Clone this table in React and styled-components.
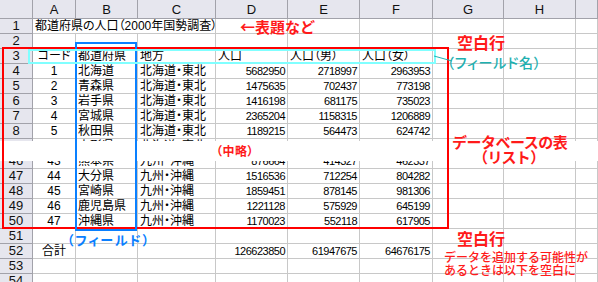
import React from 'react';
import styled, { createGlobalStyle } from 'styled-components';

const COLS = '33px 43px 62px 78px 72px 72px 73px 71px 72px 1fr';
const LETTERS = ['A', 'B', 'C', 'D', 'E', 'F', 'G', 'H', ''];

const GlobalStyle = createGlobalStyle`
  html, body {
    margin: 0;
    padding: 0;
    background: #fff;
  }
  body {
    font-family: "Liberation Sans", "Noto Sans CJK JP", sans-serif;
    color: #000;
  }
`;

const Sheet = styled.div`
  position: relative;
  width: 598px;
  height: 282px;
  overflow: hidden;
  background: #fff;
`;

const Row = styled.div`
  display: grid;
  grid-template-columns: ${COLS};
  height: ${({ $h }) => $h || 15}px;
  flex-shrink: 0;
`;

// 列見出し・行番号のセル
const HeadCell = styled.div`
  box-sizing: border-box;
  background: #e6e6ee;
  border-right: 1px solid #a2a2aa;
  border-bottom: 1px solid #a2a2aa;
  font-family: "Liberation Sans", sans-serif;
  font-size: 13px;
  line-height: ${({ $lh }) => $lh || 14}px;
  padding-top: ${({ $pt }) => $pt || 0}px;
  text-align: center;
  color: #111;
`;

const Cell = styled.div`
  box-sizing: border-box;
  border-right: 1px solid #c8c8c8;
  border-bottom: 1px solid #c8c8c8;
  grid-column: span ${({ $span }) => $span || 1};
  padding: 0 2px;
  font-family: "Liberation Sans", "Noto Sans CJK JP", sans-serif;
  font-feature-settings: "palt";
  font-size: ${({ $num }) => ($num ? 11 : 12)}px;
  letter-spacing: ${({ $num }) => ($num ? -0.5 : 0)}px;
  line-height: 14px;
  white-space: nowrap;
  overflow: hidden;
  text-align: ${({ $align }) => $align || 'left'};
`;

// 中略部分の切り取り
const Clip = styled.div`
  height: ${({ $h }) => $h}px;
  overflow: hidden;
  display: flex;
  flex-direction: column;
  justify-content: ${({ $bottom }) => ($bottom ? 'flex-end' : 'flex-start')};
`;

const Gap = styled.div`
  height: 20px;
  background: #fff;
`;

const Frame = styled.div`
  position: absolute;
  box-sizing: border-box;
  left: ${({ $x }) => $x}px;
  top: ${({ $y }) => $y}px;
  width: ${({ $w }) => $w}px;
  height: ${({ $h }) => $h}px;
  border: 2px solid ${({ $color }) => $color};
  pointer-events: none;
`;

const Note = styled.div`
  position: absolute;
  left: ${({ $x }) => $x}px;
  top: ${({ $y }) => $y}px;
  color: ${({ $color }) => $color || '#ff1a1a'};
  font-family: "Noto Sans CJK JP", sans-serif;
  font-size: ${({ $size }) => $size || 15}px;
  font-weight: ${({ $weight }) => $weight || 700};
  line-height: ${({ $lh }) => ($lh ? `${$lh}px` : 1)};
  white-space: nowrap;
  text-align: ${({ $align }) => $align || 'left'};
`;

const Line = styled.span`
  display: block;
  font-feature-settings: ${({ $palt }) => ($palt ? '"palt"' : 'normal')};
  letter-spacing: ${({ $ls }) => $ls || 0}px;
`;

const Connector = styled.svg`
  position: absolute;
  left: 433px;
  top: 54px;
`;

const rows = [
  { n: 1, title: '都道府県の人口（2000年国勢調査）' },
  { n: 2 },
  { n: 3, v: ['コード', '都道府県', '地方', '人口', '人口（男）', '人口（女）'], head: true },
  { n: 4, v: ['1', '北海道', '北海道・東北', '5682950', '2718997', '2963953'] },
  { n: 5, v: ['2', '青森県', '北海道・東北', '1475635', '702437', '773198'] },
  { n: 6, v: ['3', '岩手県', '北海道・東北', '1416198', '681175', '735023'] },
  { n: 7, v: ['4', '宮城県', '北海道・東北', '2365204', '1158315', '1206889'] },
  { n: 8, v: ['5', '秋田県', '北海道・東北', '1189215', '564473', '624742'] },
];

const cut1 = { n: 9, v: ['6', '山形県', '北海道・東北', '1244147', '597800', '646347'] };
const cut2 = { n: 46, v: ['43', '熊本県', '九州・沖縄', '876664', '414327', '462337'] };

const rows2 = [
  { n: 47, v: ['44', '大分県', '九州・沖縄', '1516536', '712254', '804282'] },
  { n: 48, v: ['45', '宮崎県', '九州・沖縄', '1859451', '878145', '981306'] },
  { n: 49, v: ['46', '鹿児島県', '九州・沖縄', '1221128', '575929', '645199'] },
  { n: 50, v: ['47', '沖縄県', '九州・沖縄', '1170023', '552118', '617905'] },
  { n: 51 },
  { n: 52, v: ['合計', '', '', '126623850', '61947675', '64676175'] },
  { n: 53 },
  { n: 54 },
];

const SheetRow = ({ r }) => {
  if (r.title) {
    return (
      <Row>
        <HeadCell>{r.n}</HeadCell>
        <Cell $span={3}>{r.title}</Cell>
        {[0, 1, 2, 3, 4, 5].map((i) => <Cell key={i} />)}
      </Row>
    );
  }
  const v = r.v || ['', '', '', '', '', ''];
  return (
    <Row>
      <HeadCell>{r.n}</HeadCell>
      <Cell $align="center">{v[0]}</Cell>
      <Cell>{v[1]}</Cell>
      <Cell>{v[2]}</Cell>
      {v.slice(3).map((x, i) => (
        <Cell key={i} $num={!r.head} $align={r.head ? 'left' : 'right'}>
          {x}
        </Cell>
      ))}
      <Cell />
      <Cell />
      <Cell />
    </Row>
  );
};

export default function App() {
  return (
    <>
      <GlobalStyle />
      <Sheet>
        <Row $h={19}>
          <HeadCell />
          {LETTERS.map((l, i) => (
            <HeadCell key={i} $lh={16} $pt={2}>{l}</HeadCell>
          ))}
        </Row>
        {rows.map((r) => <SheetRow key={r.n} r={r} />)}
        <Clip $h={2}>
          <SheetRow r={cut1} />
        </Clip>
        <Gap />
        <Clip $h={8} $bottom>
          <SheetRow r={cut2} />
        </Clip>
        {rows2.map((r) => <SheetRow key={r.n} r={r} />)}

        <Frame $x={2} $y={47} $w={447} $h={182} $color="#ff0000" />
        <Frame $x={75} $y={42} $w={62} $h={189} $color="#0a80ff" />
        <Frame $x={28} $y={49} $w={408} $h={15} $color="#80ffff" />
        <Connector width="22" height="10">
          <line x1="1" y1="2" x2="19" y2="7" stroke="#20b4b4" strokeWidth="1" />
        </Connector>

        <Note $x={240} $y={19}>←表題など</Note>
        <Note $x={457} $y={34} $size={16}>空白行</Note>
        <Note $x={447} $y={55} $size={14} $color="#1fb0b0" $weight={500}>
          <Line $palt $ls={0.8}>（フィールド名）</Line>
        </Note>
        <Note $x={216} $y={145} $size={12}>
          <Line $palt $ls={0.5}>（中略）</Line>
        </Note>
        <Note $x={452} $y={134} $align="center" $lh={15} $size={15}>
          <Line $ls={-0.5}>データベースの表</Line>
          <Line $palt $ls={1}>（リスト）</Line>
        </Note>
        <Note $x={67} $y={233} $size={13} $color="#0a80ff">
          <Line $palt $ls={1.8}>（フィールド）</Line>
        </Note>
        <Note $x={457} $y={230} $size={16}>空白行</Note>
        <Note $x={444} $y={250} $size={12} $weight={500} $lh={13}>
          <Line>データを追加する可能性が</Line>
          <Line>あるときは以下を空白に</Line>
        </Note>
      </Sheet>
    </>
  );
}
